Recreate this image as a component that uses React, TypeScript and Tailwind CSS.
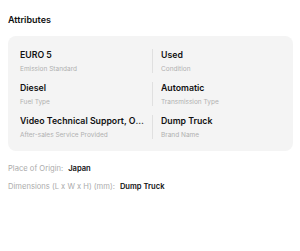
const attrs = [
  { value: 'EURO 5', label: 'Emission Standard' },
  { value: 'Used', label: 'Condition' },
  { value: 'Diesel', label: 'Fuel Type' },
  { value: 'Automatic', label: 'Transmission Type' },
  { value: 'Video Technical Support, Online Support', label: 'After-sales Service Provided' },
  { value: 'Dump Truck', label: 'Brand Name' },
];

export default function App() {
  return (
    <div className="w-[300px] h-[251px] bg-white px-2 pt-[14px] font-['Inter',sans-serif]">
      <h3 className="text-[9px] font-semibold text-[#111] leading-[12px]">Attributes</h3>

      <div className="mt-[10px] w-[285px] bg-[#f4f4f4] rounded-lg pl-3 pr-2 pt-[13px] pb-[12px] grid grid-cols-[132px_1fr] gap-y-[9px]">
        {attrs.map((a, i) => (
          <div key={a.label} className={`min-w-0 ${i % 2 === 1 ? 'border-l border-[#e0e0e0] pl-2' : 'pr-[6px]'}`}>
            <div className="text-[8.75px] font-semibold text-[#111] leading-[12px] truncate">{a.value}</div>
            <div className="text-[6.5px] text-[#b0b0b0] leading-[8px] mt-[4px]">{a.label}</div>
          </div>
        ))}
      </div>

      <div className="mt-[13px] space-y-[8px] text-[7.6px] leading-[10px]">
        <div>
          <span className="text-[#ababab]">Place of Origin:</span>
          <span className="ml-[5px] font-semibold text-[#111]">Japan</span>
        </div>
        <div>
          <span className="text-[#ababab]">Dimensions (L x W x H) (mm):</span>
          <span className="ml-[5px] font-semibold text-[#111]">Dump Truck</span>
        </div>
      </div>
    </div>
  );
}
